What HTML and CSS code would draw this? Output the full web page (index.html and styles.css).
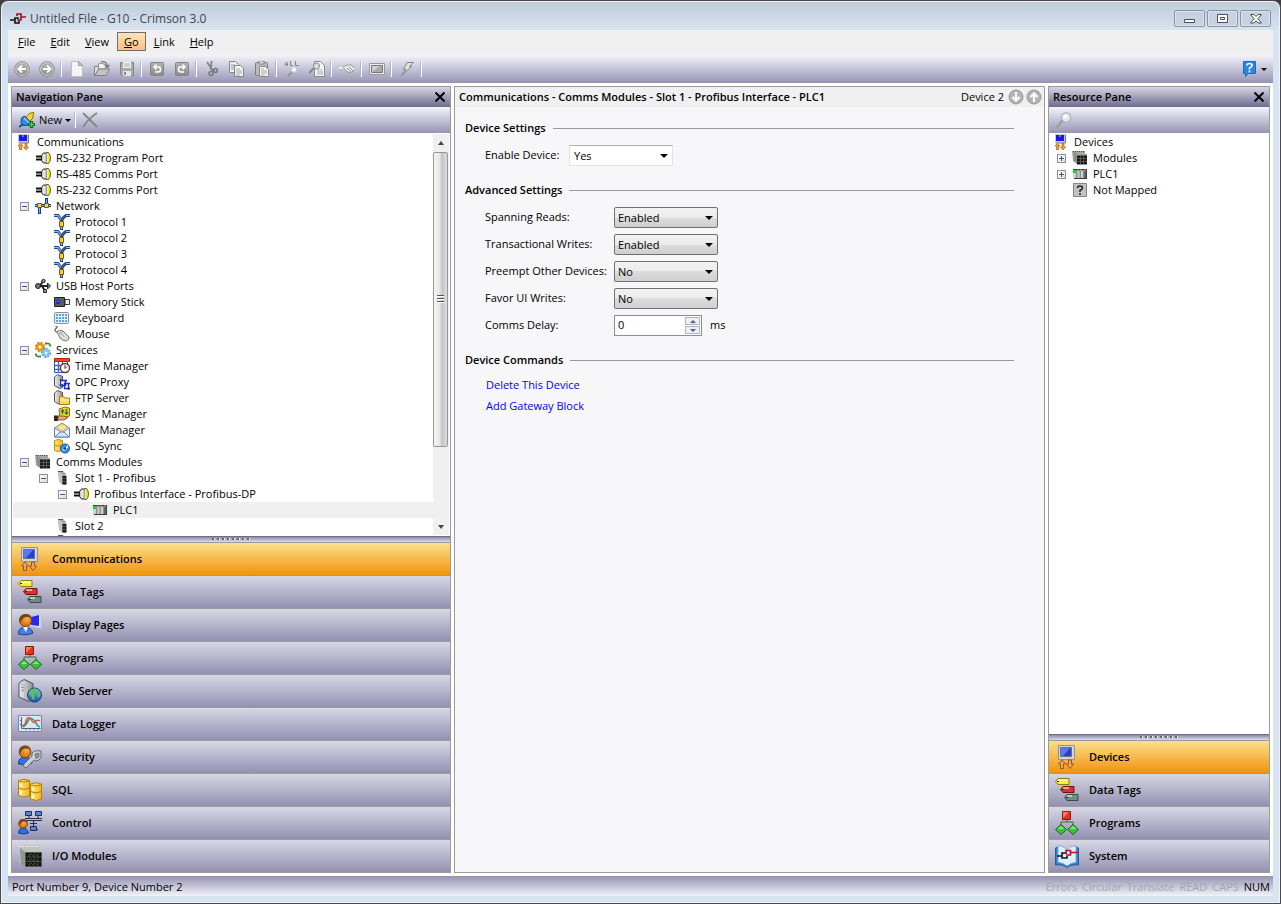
FILE: index.html
```html
<!DOCTYPE html>
<html lang="en">
<head>
  <meta charset="UTF-8">
  <title>Untitled File - G10 - Crimson 3.0</title>
  <link rel="stylesheet" href="styles.css">
</head>
<body>
  <!-- icon set -->
  <svg class="defs" aria-hidden="true">
    <defs>
      <linearGradient id="gGrey" x1="0" y1="0" x2="0" y2="1"><stop offset="0" stop-color="#b4b4b4"/><stop offset="1" stop-color="#8c8c8c"/></linearGradient>
      <linearGradient id="gServer" x1="0" y1="0" x2="1" y2="0"><stop offset="0" stop-color="#f2f2f2"/><stop offset="1" stop-color="#8b8f94"/></linearGradient>
      <linearGradient id="gGold" x1="0" y1="0" x2="1" y2="0"><stop offset="0" stop-color="#ffe98a"/><stop offset="1" stop-color="#f2b91c"/></linearGradient>
      <radialGradient id="gFace" cx=".6" cy=".35"><stop offset="0" stop-color="#ffb04a"/><stop offset="1" stop-color="#dd7a12"/></radialGradient>
      <linearGradient id="gGlobe" x1="0" y1="0" x2="0" y2="1"><stop offset="0" stop-color="#7fc4f5"/><stop offset="1" stop-color="#1450a8"/></linearGradient>
    </defs>

    <symbol id="i-logo" viewBox="0 0 16 14"><path d="M0 8h5M9 6H5v5h4V9" fill="none" stroke="#111" stroke-width="1.6"/><path d="M7 4V2h4v6H7M11 5h5" fill="none" stroke="#a3101c" stroke-width="1.6"/></symbol>

    <!-- toolbar -->
    <symbol id="i-back" viewBox="0 0 16 16"><circle cx="8" cy="8" r="7.3" fill="url(#gGrey)" stroke="#878787"/><circle cx="8" cy="8" r="6.3" fill="none" stroke="#d5d5d5"/><path d="M12 8H5M8 4.5L4.5 8 8 11.500" fill="none" stroke="#fff" stroke-width="2"/></symbol>
    <symbol id="i-fwd" viewBox="0 0 16 16"><circle cx="8" cy="8" r="7.3" fill="url(#gGrey)" stroke="#878787"/><circle cx="8" cy="8" r="6.3" fill="none" stroke="#d5d5d5"/><path d="M4 8h7M8 4.500L11.500 8 8 11.500" fill="none" stroke="#fff" stroke-width="2"/></symbol>
    <symbol id="i-down" viewBox="0 0 16 16"><circle cx="8" cy="8" r="7" fill="#b3b3b3" stroke="#999"/><path d="M8 3v8M4.500 8L8 11.500 11.500 8" fill="none" stroke="#fff" stroke-width="2.200"/></symbol>
    <symbol id="i-up" viewBox="0 0 16 16"><circle cx="8" cy="8" r="7" fill="#b3b3b3" stroke="#999"/><path d="M8 13V5M4.500 8L8 4.500 11.500 8" fill="none" stroke="#fff" stroke-width="2.200"/></symbol>
    <symbol id="i-new" viewBox="0 0 16 16"><path d="M2.500.5h7l4 4v11h-11z" fill="#f4f4f4" stroke="#bdbdc2"/><path d="M9.500.5v4h4z" fill="#c9c9c9" stroke="#999"/></symbol>
    <symbol id="i-open" viewBox="0 0 16 16"><path d="M.5 14.500v-9h4l1 1.500h6v7.500z" fill="#ddd" stroke="#858585"/><path d="M4.500 6V3l3-1 4 2v4h-7z" fill="#f2f2f2" stroke="#8a8a8a"/><path d="M1 14.500l3.500-6.500h11l-3.500 6.500z" fill="#c4c4c4" stroke="#7f7f7f"/><path d="M7 .8q6-1 6.500 5M11 4l2.500 2.500L15.500 4" fill="none" stroke="#777" stroke-width="1.300"/></symbol>
    <symbol id="i-save" viewBox="0 0 16 16"><path d="M1.500 1.500h13v13h-12l-1-1z" fill="#aaa" stroke="#858585"/><path d="M4 1h8v6H4z" fill="#f2f2f2"/><path d="M5 3h6M5 5h6" stroke="#aaa"/><path d="M4 10h8v5H4z" fill="#e6e6e6"/><path d="M5 11h2v3H5z" fill="#888"/></symbol>
    <symbol id="i-undo" viewBox="0 0 16 16"><rect x="1.500" y="1.500" width="13" height="13" rx="1" fill="url(#gGrey)" stroke="#858585"/><path d="M5 6h5q1.500 0 1.500 2.500T9 11H6M7.500 3.500L5 6l2.500 2.500" fill="none" stroke="#fff" stroke-width="1.500"/></symbol>
    <symbol id="i-redo" viewBox="0 0 16 16"><rect x="1.500" y="1.500" width="13" height="13" rx="1" fill="url(#gGrey)" stroke="#858585"/><path d="M11 6H6Q4.500 6 4.500 8.500T7 11h3M8.500 3.500L11 6 8.500 8.500" fill="none" stroke="#fff" stroke-width="1.500"/></symbol>
    <symbol id="i-cut" viewBox="0 0 16 16"><path d="M3 1l6 9M7.500 0L7 9" fill="none" stroke="#858585" stroke-width="1.800"/><circle cx="11.500" cy="9.500" r="1.900" fill="none" stroke="#777" stroke-width="1.500"/><circle cx="7" cy="12.500" r="2" fill="none" stroke="#777" stroke-width="1.500"/></symbol>
    <symbol id="i-copy" viewBox="0 0 16 16"><path d="M.5.500h6l3 3v8h-9z" fill="#eee" stroke="#888"/><path d="M2 4h4M2 6h4M2 8h3" stroke="#999"/><path d="M5.500 4.500h6l3 3v8h-9z" fill="#f4f4f4" stroke="#858585"/><path d="M7 8h4M7 10h6M7 12h6M7 14h4" stroke="#aaa"/></symbol>
    <symbol id="i-paste" viewBox="0 0 16 16"><rect x="1.500" y="1.500" width="12" height="13" rx="1" fill="#bbb" stroke="#7d7d7d"/><path d="M5 0h5v3H5z" fill="#ddd" stroke="#888"/><path d="M5.500 5.500h6l3 3v7h-9z" fill="#f4f4f4" stroke="#8a8a8a"/><path d="M7 8h3M7 10h6M7 12h6M7 14h4" stroke="#aaa"/></symbol>
    <symbol id="i-findall" viewBox="0 0 16 16"><path d="M1.500 5V2l1-1 1 1v3M1.500 3.500h2M6.500 0v4.500H9M11.500 0v4.500H15" fill="none" stroke="#888"/><path d="M4 15l4-4" stroke="#999" stroke-width="2"/><circle cx="10" cy="8.500" r="2.800" fill="#f4f4f4" stroke="#c4c4c4"/></symbol>
    <symbol id="i-findpage" viewBox="0 0 16 16"><path d="M5.500.500h6l4 4v11h-10z" fill="#f3f3f3" stroke="#8a8a8a"/><path d="M8 9h5M8 11h6M8 13h6" stroke="#aaa"/><path d="M0 12l5-5" stroke="#888" stroke-width="2"/><circle cx="7.500" cy="5" r="3" fill="#ddd" stroke="#888"/></symbol>
    <symbol id="i-hand" viewBox="0 0 16 16"><path d="M0 6.500h5" stroke="#eee" stroke-width="3"/><path d="M0 5h4M1 8.500h3" stroke="#b5b5b5"/><path d="M4 6l4-2h4l4 4-3 3-3 1-4-3z" fill="#e9e9e9" stroke="#a0a0a0"/><path d="M8 7l4 4M10 6l4 4M8 10l2 2" stroke="#909090"/><path d="M14 5h2v4" fill="none" stroke="#c9c9c9" stroke-width="2"/></symbol>
    <symbol id="i-screen" viewBox="0 0 16 16"><path d="M.5 2.500h15v11H.5z" fill="#eee" stroke="#999"/><path d="M2.500 4.500h11v7h-11z" fill="#a9a9a9" stroke="#777"/><path d="M3 11l8-6H3z" fill="#cfcfcf"/></symbol>
    <symbol id="i-bolt" viewBox="0 0 16 16"><path d="M8 1.500h6.500l-4 4h2L2 15l5-6.500H4.500z" fill="#e0e0e0" stroke="#858585"/></symbol>
    <symbol id="i-help" viewBox="0 0 16 16"><path d="M1.500.5h12v12H6l-2.500 3v-3h-2z" fill="#2b86dc" stroke="#1c6dc0"/><path d="M5 4.500Q5 2.500 7.500 2.500T10 4.500Q10 6 7.500 7v1.500M7.500 9.500v2" fill="none" stroke="#fff" stroke-width="1.700"/></symbol>
    <symbol id="i-plug" viewBox="0 0 16 16"><path d="M7 5l4-4h2l1-1 1 1-1 2v3l-4 4z" fill="#ffd21e" stroke="#8a6a00" stroke-width=".9"/><path d="M2.500 6l3-2 6.500 6.500-2 2.500-6 .5-2-3z" fill="#2a8be8" stroke="#0d4c96"/><path d="M0 15l4-3" stroke="#0d4c96" stroke-width="1.800"/><path d="M5 6l5 5" stroke="#9fd0ff" stroke-width="1.200"/><path d="M12.500 9v7M9 12.500h7" stroke="#0b6b1c" stroke-width="3.200"/><path d="M12.500 10v5M10 12.500h5" stroke="#3fcf52" stroke-width="1.400"/></symbol>
    <symbol id="i-delete" viewBox="0 0 16 16"><path d="M1 1l14 14M15 1Q7 6 1 15" fill="none" stroke="#878787" stroke-width="1.900"/></symbol>
    <symbol id="i-search" viewBox="0 0 16 16"><path d="M.5 15.500l6-7" stroke="#999" stroke-width="2"/><circle cx="10" cy="5.500" r="4.700" fill="#e3e6e8" stroke="#a5a5a5"/><circle cx="9.500" cy="4.500" r="2" fill="#fff"/></symbol>
    <symbol id="i-close" viewBox="0 0 10 10"><path d="M.5.500l9 9M9.500.500l-9 9" fill="none" stroke="#000" stroke-width="2"/></symbol>

    <!-- tree -->
    <symbol id="t-comms" viewBox="0 0 16 16"><path d="M2 0h11v9H2z" fill="#c8cbd0"/><path d="M3 1h8v6H3z" fill="#1717ee"/><path d="M6 1h2v2H6z" fill="#7474ff"/><path d="M12.500 1v8H3" fill="none" stroke="#777"/><path d="M4.500 9.500L2 12h1.500v4h2v-4H7zM10 16l-2.500-3H9V9.500h2V13h1.500z" fill="#f39a2d" stroke="#a9530a" stroke-width=".6"/></symbol>
    <symbol id="t-port" viewBox="0 0 16 16"><path d="M1 6.500h6M1 9.500h6" stroke="#111" stroke-width="1.800"/><path d="M6.500 5.500l2-2.500h3v10h-3l-2-2.500z" fill="#c9c9c9" stroke="#222"/><path d="M9 4v8" stroke="#fff"/><path d="M11.500 2.500h2q2 2 2 5.500t-2 5.500h-2z" fill="#f7e81e" stroke="#4a4a3a" stroke-width=".9"/><path d="M12 3v10" stroke="#eee"/></symbol>
    <symbol id="t-net" viewBox="0 0 16 16"><path d="M0 7.500h16M4.500 8v8M11.500 0v7" stroke="#123f86" stroke-width="3"/><path d="M0 7.500h16M4.500 8v7M11.500 1v6" stroke="#73b7f4"/><path d="M2.500 5.500h4v4h-4zM9.500 5.500h4v4h-4z" fill="#ffd257" stroke="#8b5200"/></symbol>
    <symbol id="t-proto" viewBox="0 0 16 16"><path d="M0 1.500h4l3.500 5V16M8 6l2-3 2-1.500h4" fill="none" stroke="#174a91" stroke-width="3"/><path d="M0 1.500h4l3 4M12 1.500h4M7.500 12v3" fill="none" stroke="#8bc6f7" stroke-width="1.200"/><path d="M8 6l3-3.500" fill="none" stroke="#555" stroke-width="1.500"/><path d="M5.500 7.500h4v5h-4z" fill="#ffc94c" stroke="#8b5200"/></symbol>
    <symbol id="t-usb" viewBox="0 0 16 16"><path d="M2 8h12M5 8l3-5M7 8l3 5" fill="none" stroke="#222" stroke-width="2"/><circle cx="3" cy="8" r="2.500" fill="#777" stroke="#222"/><path d="M12.500 5l3 3-3 3z" fill="#777" stroke="#222"/><circle cx="8.500" cy="3" r="1.700" fill="#999" stroke="#222"/><path d="M8.500 11.500h3v3h-3z" fill="#999" stroke="#222"/></symbol>
    <symbol id="t-stick" viewBox="0 0 16 16"><path d="M.5 3.500h10v9H.5z" fill="#565b66" stroke="#222"/><path d="M11 5.500h4.500v5H11z" fill="#eee" stroke="#333"/><circle cx="4" cy="8" r="2" fill="#1414ff"/><path d="M3.500 7h1v1h-1z" fill="#fff"/></symbol>
    <symbol id="t-kbd" viewBox="0 0 16 16"><rect x=".5" y="2.500" width="14" height="11" rx="1" fill="#e6eef8" stroke="#8b8f96"/><path d="M2 5h11M2 8h11M2 11h11" stroke="#5ba3ec" stroke-width="2" stroke-dasharray="2 1"/></symbol>
    <symbol id="t-mouse" viewBox="0 0 16 16"><path d="M1 0h2v2L1 3v2l3 2" fill="none" stroke="#444"/><path d="M3 6q2-3 6-1l6 6q1 3-3 4-3 0-6-3z" fill="#deded8" stroke="#777"/><path d="M4 9l5-4M6.500 7l4 4" stroke="#999"/></symbol>
    <symbol id="t-gears" viewBox="0 0 16 16"><circle cx="5" cy="5" r="4.800" fill="none" stroke="#a66200" stroke-dasharray="2 1.800"/><circle cx="5" cy="5" r="3" fill="#fff" stroke="#e8980f" stroke-width="2.800"/><circle cx="11" cy="11" r="4.500" fill="none" stroke="#1f6db6" stroke-dasharray="1.800 1.600"/><circle cx="11" cy="11" r="2.700" fill="#fff" stroke="#7cc0f8" stroke-width="2.600"/><path d="M10 1.500h3q2 0 2.500 3M11 .5v2M6 14.500H3q-2 0-2.500-3M5 13.500v2" fill="none" stroke="#23932c" stroke-width="1.700"/></symbol>
    <symbol id="t-time" viewBox="0 0 16 16"><path d="M.5.500h15v3H.5z" fill="#f0431f" stroke="#b52a0d"/><path d="M.5 3.500h13v11H.5z" fill="#fff" stroke="#1d56b4"/><path d="M1 7.500h12M1 11.500h12M4.500 4v11M8.500 4v11" stroke="#2b6ed2" stroke-width="1.300"/><circle cx="11" cy="10" r="4.500" fill="#fff" stroke="#7c2c24" stroke-width="1.300"/><path d="M11 7v3.500l2-2" fill="none" stroke="#333"/></symbol>
    <symbol id="t-opc" viewBox="0 0 16 16"><path d="M.5 3l3-2.500 5 2v11l-3 1-5-3z" fill="url(#gServer)" stroke="#4c4f52"/><path d="M5 6h5v4H5z" fill="#fff"/><path d="M6.500 5v7M6 6.500h7M11.500 6v6M6 11.500h5M10.500 8.500v6M10 9.500h6M14.500 9v7M10 14.500h6" stroke="#1c24d8" stroke-width="1.400"/></symbol>
    <symbol id="t-ftp" viewBox="0 0 16 16"><path d="M.5 3l3-2.500 5 2v11l-3 1-5-3z" fill="url(#gServer)" stroke="#4c4f52"/><path d="M5.500 14.500v-8h4l1 1.500h5v6.500z" fill="#ffd95c" stroke="#b47d10"/><path d="M6 10h9" stroke="#fff1b0"/></symbol>
    <symbol id="t-sync" viewBox="0 0 16 16"><path d="M5 3l6-2 4.500 1v8l-4 3H6z" fill="#f4c93a" stroke="#9a6a00"/><path d="M8.500 8V4M7 5.500L8.500 4 10 5.500M12.500 3v5M11 6.500L12.500 8 14 6.500" fill="none" stroke="#17851d" stroke-width="1.400"/><path d="M0 9.500h4V15H0z" fill="#33261c"/><path d="M4 10h5l5 1-4 3H4z" fill="#e9ae6c" stroke="#70411a" stroke-width=".8"/></symbol>
    <symbol id="t-mail" viewBox="0 0 16 16"><path d="M.5 6L8 1l7.500 5v9H.5z" fill="#eaf3ff" stroke="#6d7fae"/><path d="M3.500 6V4L8 2l4.500 2v2L8 9z" fill="#ffe590" stroke="#c5a44a" stroke-width=".7"/><path d="M1 6l6 4M15 6l-6 4M1 15l5-5h4l5 5z" fill="#d3e5fb" stroke="#6d7fae"/></symbol>
    <symbol id="t-sql" viewBox="0 0 16 16"><path d="M.5 2.500Q4 .5 8.500 2.500v10Q4 14.500.5 12.500z" fill="url(#gGold)" stroke="#c18b0a"/><path d="M1 7.500q4 1 7 0" fill="none" stroke="#c18b0a"/><circle cx="11" cy="10.500" r="4.500" fill="#3a96ea" stroke="#154e94"/><path d="M8.500 12q3 1 5-3M13.500 7.500v2h-2" fill="none" stroke="#fff"/><circle cx="11" cy="10.500" r="1.200" fill="#0e3f80"/></symbol>
    <symbol id="t-modules" viewBox="0 0 16 16"><path d="M0 1h13v3h2v10H5l-4-3z" fill="#a3a8a0"/><path d="M1.500 1v10L5 13.500V4z" fill="#8b9188"/><path d="M1 1.500h12" stroke="#4c4f4a" stroke-dasharray="1 1"/><path d="M5 5.500h10v9H5z" fill="#191919"/><path d="M5 8.500h10M5 11.500h10" stroke="#63675f" stroke-width=".8"/><path d="M8.500 5v9M11.500 5v9" stroke="#63675f" stroke-width=".8"/></symbol>
    <symbol id="t-slot" viewBox="0 0 16 16"><path d="M4 1h5l3 3v10.500H8l-3-3z" fill="#a3a8a0"/><path d="M5 1v10l3 3V4z" fill="#c3c8c0"/><path d="M4 1.500h5" stroke="#555"/><path d="M8.500 6h4v8.500h-4z" fill="#191919"/><path d="M8.500 8.500h4M8.500 11.500h4" stroke="#70746c" stroke-width=".8"/></symbol>
    <symbol id="t-plc" viewBox="0 0 16 16"><path d="M1 3h14v10H2z" fill="#3c3c3c"/><path d="M1 4h13v8H1z" fill="#8e8e8e"/><path d="M1 7h3v5H1zM5.500 5h2v7h-2zM9 5h2v7H9z" fill="#d0d0d0"/><path d="M12 5h2v7h-2z" fill="#666"/><path d="M1 4h3v3H1z" fill="#19d32b"/><path d="M5 3h2v1H5zM8 3h2v1H8zM12 3h2v1h-2z" fill="#ff2a2a"/></symbol>
    <symbol id="t-unknown" viewBox="0 0 16 16"><path d="M1.500 1.500h13v13h-13z" fill="#c2c2c2" stroke="#858585"/><path d="M5.500 6Q5.500 4 8 4t2.500 2Q10.500 7 8 8.500V10M8 11v2" fill="none" stroke="#222" stroke-width="1.500"/></symbol>

    <!-- categories -->
    <symbol id="c-comms" viewBox="0 0 24 24"><path d="M3.500.500h16v14h-16z" fill="#cfd6de" stroke="#8a929c"/><path d="M5.500 2.500h11v9h-11z" fill="#2a3fd0" stroke="#6a7088"/><path d="M6 3h9L8 11H6z" fill="#5b78ee"/><path d="M7 15l-3.500 4H5.500v4.500h3V19h2zM15 23.500L11.500 19h2v-4h3v4h2z" fill="#e8a466" stroke="#a3561c"/></symbol>
    <symbol id="c-tags" viewBox="0 0 24 24"><path d="M3 .5h11v6H3l-2.500-3z" fill="#fdf02c" stroke="#8d7b12"/><path d="M8 8.500h11v6H8l-2.500-3z" fill="#d93333" stroke="#6f1212"/><path d="M12 16.500h11v6H12l-2.500-3z" fill="#758b7d" stroke="#3c4b42"/><path d="M3 2h10M8 10h6M12 18h5" stroke="#fff" stroke-opacity=".7" stroke-width="1.500"/><path d="M2 3.500h2M7 11.500h2M11 19.500h2" stroke="#222"/></symbol>
    <symbol id="c-display" viewBox="0 0 24 24"><path d="M12 3l11-2v14l-11-2z" fill="#dfe4f2" stroke="#c3c8d8"/><path d="M13 4l8-2v11l-8-1z" fill="#2828f0"/><path d="M.5 20Q1 14 7 14t8 6q-6 3-14.500 1z" fill="#4b7fdf" stroke="#1b428f"/><path d="M5 14l3 5 2-5z" fill="#fff"/><circle cx="7.500" cy="7.500" r="6" fill="url(#gFace)" stroke="#7c3f09"/><path d="M1.500 8Q1 1 8 1q5 0 6 5-2-2.500-5-2-4 0-6 5z" fill="#76471a"/></symbol>
    <symbol id="c-programs" viewBox="0 0 24 24"><path d="M12 8v3M6 15v-4h12v4" fill="none" stroke="#326c35"/><path d="M7.500.500h8v8h-8z" fill="#e8301c" stroke="#8b160a"/><path d="M8 7V1h6z" fill="#ff7a5f"/><path d="M6 13.500l5.500 5L6 23.500.5 18.500zM18 13.500l5.500 5-5.500 5-5.500-5z" fill="#3fc23b" stroke="#176a18"/><path d="M6 15l3.500 3H2.500zM18 15l3.500 3h-7z" fill="#86e37c"/></symbol>
    <symbol id="c-web" viewBox="0 0 24 24"><path d="M1 4l5-3.500 9 4v15l-4 3L1 18z" fill="url(#gServer)" stroke="#4e5256"/><path d="M1 4l6 3v13" fill="none" stroke="#b5b5b5"/><path d="M3 8l3 1M3 11l3 1" stroke="#888"/><circle cx="16.500" cy="16" r="7" fill="url(#gGlobe)" stroke="#173f7d"/><path d="M11 13q2-4 6-3.500l1 2-2 2 1 3-1 5q-2-1-3-5zM19 11l3 2v4l-2 2-1-4z" fill="#5cc053"/></symbol>
    <symbol id="c-logger" viewBox="0 0 24 24"><path d="M.5 3.500h23v16H.5z" fill="#d7eafc" stroke="#5d8fd0"/><path d="M3.500 5v11.500h19M2 8.500h2M2 12.500h2M8 16v2M12 16v2M16 16v2M20 16v2" fill="none" stroke="#55667c"/><path d="M5 15q3-2 5-6t4-2q3 1 4 4t4 4" fill="none" stroke="#3da06a" stroke-width="1.800"/><path d="M4 14q3 0 4-5t5-2q2 5 4 3 2-3 5-1" fill="none" stroke="#e0504a" stroke-width="1.500"/></symbol>
    <symbol id="c-security" viewBox="0 0 24 24"><path d="M.5 18Q1 12 7 12t7 6q-6 3-13.500 1z" fill="#2f72e0" stroke="#133d8c"/><circle cx="7" cy="7" r="5.800" fill="url(#gFace)" stroke="#7c3f09"/><path d="M1 7Q1 .5 7 .5q5 0 6 5-2-2.500-5-2-4 0-6 5z" fill="#76471a"/><path d="M14 8q2-3 9-2v6q-1 4-5 4l-2-1-8 8-2.500-1.500L6 19l8-8z" fill="#c9ced4" stroke="#676c72"/><path d="M17 9l4-1v4l-3 2z" fill="#8f959c" stroke="#5a5f65" stroke-width=".6"/></symbol>
    <symbol id="c-sql" viewBox="0 0 24 24"><path d="M.5 2.500Q6 0 11.500 2.500v15Q6 20.500.5 17.500z" fill="url(#gGold)" stroke="#b58106"/><path d="M.5 10q5.500 3 11 0M.5 3q5.500 2 11 0" fill="none" stroke="#b58106"/><path d="M12.500 6Q18 3.500 23.500 6v15q-5.500 3-11 0z" fill="url(#gGold)" stroke="#b58106"/><path d="M12.500 13.500q5.500 3 11 0M12.500 7q5.500 2 11 0" fill="none" stroke="#b58106"/><path d="M3 6v3M3 13v4M15 10v3M15 17v4" stroke="#fff6c0" stroke-width="2"/></symbol>
    <symbol id="c-control" viewBox="0 0 24 24"><path d="M7 7.500h17M7 9.500h17M11 5v2M20 5v2M15.500 10v6M12 12.500h7M12 18.500h8" stroke="#26304f"/><path d="M7.500.500h6v4h-6zM17.500.500h6v4h-6zM12.500 15.500h6v4h-6z" fill="#5b86d0" stroke="#1f2f55"/><path d="M.5 22Q1 17 5 17t5.500 5q-5 2-10 0z" fill="#2f72e0" stroke="#133d8c"/><circle cx="5" cy="13" r="4.200" fill="url(#gFace)" stroke="#7c3f09"/><path d="M.8 13q-.5-5 4.200-5t4.500 4q-2-2-3.500-1.500-3 0-4 3.500z" fill="#76471a"/></symbol>
    <symbol id="c-io" viewBox="0 0 24 24"><path d="M1 3l4-2h17v3l1 2v3H7v14l-5-4z" fill="#bfc3ba"/><path d="M2 4l5 4v15l-4-3z" fill="#92978c"/><path d="M1 2.500h20" stroke="#eef0ea" stroke-dasharray="2 1"/><path d="M7.500 8.500h16v14h-16z" fill="#0e0e0e" stroke="#555a50"/><path d="M8 13h15M8 17.500h15M12 9v13M16 9v13M20 9v13" stroke="#4b5047"/><path d="M9 10l2 2M13 10l2 2M17 10l2 2M9 15l2 2M13 15l2 2M17 15l2 2M9 19l2 2M13 19l2 2M17 19l2 2" stroke="#60665b" stroke-width=".7"/></symbol>
    <symbol id="c-system" viewBox="0 0 24 24"><path d="M.5 4l3-1v16q5-1 8.500 3 3.500-4 8.500-3V3l3 1v17q-7-1-11.500 2.500Q7.500 20 .5 21z" fill="#2f7ed2" stroke="#205d9f"/><path d="M3 1.500q5.500 0 9 4.500 3.500-4.500 9-4.500v17q-5 0-9 3.500-4-3.500-9-3.500z" fill="#ddeefc" stroke="#88abd0"/><path d="M2 12h5M12 9H7v5h5v-2" fill="none" stroke="#151515" stroke-width="1.600"/><path d="M11 8V6.500h4.500V11H11M16 8.500h7" fill="none" stroke="#b01722" stroke-width="1.600"/></symbol>
  </svg>

  <div class="window">
    <header class="titlebar">
      <svg class="logo"><use href="#i-logo"/></svg>
      <h1>Untitled File - G10 - Crimson 3.0</h1>
      <div class="window-buttons">
        <button aria-label="Minimize"><svg viewBox="0 0 12 10"><path d="M.5 5.500h10v3H.5z" fill="#fff" stroke="#4a4f60"/></svg></button>
        <button aria-label="Restore"><svg viewBox="0 0 12 10"><path d="M.5.500h10v8H.5z" fill="#fff" stroke="#4a4f60"/><path d="M3.500 3.500h4v2h-4z" fill="#fff" stroke="#4a4f60"/></svg></button>
        <button aria-label="Close"><svg viewBox="0 0 12 10"><path d="M.5.500H4l2 2 2-2h3.500L7.800 4.800l3.700 4.200H8L6 7 4 9H.5l3.700-4.200z" fill="#fff" stroke="#4a4f60"/></svg></button>
      </div>
    </header>

    <div class="client">
      <nav class="menubar">
        <button><u>F</u>ile</button>
        <button><u>E</u>dit</button>
        <button><u>V</u>iew</button>
        <button class="active"><u>G</u>o</button>
        <button><u>L</u>ink</button>
        <button><u>H</u>elp</button>
      </nav>

      <div class="toolbar main-toolbar">
        <button aria-label="Back"><svg><use href="#i-back"/></svg></button>
        <button aria-label="Forward"><svg><use href="#i-fwd"/></svg></button>
        <span class="sep"></span>
        <button aria-label="New"><svg><use href="#i-new"/></svg></button>
        <button aria-label="Open"><svg><use href="#i-open"/></svg></button>
        <button aria-label="Save"><svg><use href="#i-save"/></svg></button>
        <span class="sep"></span>
        <button aria-label="Undo"><svg><use href="#i-undo"/></svg></button>
        <button aria-label="Redo"><svg><use href="#i-redo"/></svg></button>
        <span class="sep"></span>
        <button aria-label="Cut"><svg><use href="#i-cut"/></svg></button>
        <button aria-label="Copy"><svg><use href="#i-copy"/></svg></button>
        <button aria-label="Paste"><svg><use href="#i-paste"/></svg></button>
        <span class="sep"></span>
        <button aria-label="Find all"><svg><use href="#i-findall"/></svg></button>
        <button aria-label="Find"><svg><use href="#i-findpage"/></svg></button>
        <span class="sep"></span>
        <button aria-label="Properties"><svg><use href="#i-hand"/></svg></button>
        <span class="sep"></span>
        <button aria-label="Screen"><svg><use href="#i-screen"/></svg></button>
        <span class="sep"></span>
        <button aria-label="Download"><svg><use href="#i-bolt"/></svg></button>
        <span class="sep"></span>
        <button class="help" aria-label="Help topics"><svg><use href="#i-help"/></svg><i class="caret"></i></button>
      </div>

      <main class="panes">
        <section class="pane">
          <header class="pane-title">
            <h2>Navigation Pane</h2>
            <button aria-label="Close navigation pane"><svg><use href="#i-close"/></svg></button>
          </header>
          <div class="toolbar pane-toolbar">
            <button class="new"><svg><use href="#i-plug"/></svg>New<i class="caret"></i></button>
            <span class="sep"></span>
            <button aria-label="Delete"><svg><use href="#i-delete"/></svg></button>
          </div>
          <div class="tree-wrap">
            <ul class="tree">
              <li class="l0"><svg><use href="#t-comms"/></svg>Communications</li>
              <li class="l1"><svg><use href="#t-port"/></svg>RS-232 Program Port</li>
              <li class="l1"><svg><use href="#t-port"/></svg>RS-485 Comms Port</li>
              <li class="l1"><svg><use href="#t-port"/></svg>RS-232 Comms Port</li>
              <li class="l1 parent"><button class="toggle minus" aria-label="Collapse"></button><svg><use href="#t-net"/></svg>Network</li>
              <li class="l2"><svg><use href="#t-proto"/></svg>Protocol 1</li>
              <li class="l2"><svg><use href="#t-proto"/></svg>Protocol 2</li>
              <li class="l2"><svg><use href="#t-proto"/></svg>Protocol 3</li>
              <li class="l2"><svg><use href="#t-proto"/></svg>Protocol 4</li>
              <li class="l1 parent"><button class="toggle minus" aria-label="Collapse"></button><svg><use href="#t-usb"/></svg>USB Host Ports</li>
              <li class="l2"><svg><use href="#t-stick"/></svg>Memory Stick</li>
              <li class="l2"><svg><use href="#t-kbd"/></svg>Keyboard</li>
              <li class="l2"><svg><use href="#t-mouse"/></svg>Mouse</li>
              <li class="l1 parent"><button class="toggle minus" aria-label="Collapse"></button><svg><use href="#t-gears"/></svg>Services</li>
              <li class="l2"><svg><use href="#t-time"/></svg>Time Manager</li>
              <li class="l2"><svg><use href="#t-opc"/></svg>OPC Proxy</li>
              <li class="l2"><svg><use href="#t-ftp"/></svg>FTP Server</li>
              <li class="l2"><svg><use href="#t-sync"/></svg>Sync Manager</li>
              <li class="l2"><svg><use href="#t-mail"/></svg>Mail Manager</li>
              <li class="l2"><svg><use href="#t-sql"/></svg>SQL Sync</li>
              <li class="l1 parent"><button class="toggle minus" aria-label="Collapse"></button><svg><use href="#t-modules"/></svg>Comms Modules</li>
              <li class="l2 parent"><button class="toggle minus" aria-label="Collapse"></button><svg><use href="#t-slot"/></svg>Slot 1 - Profibus</li>
              <li class="l3 parent"><button class="toggle minus" aria-label="Collapse"></button><svg><use href="#t-port"/></svg>Profibus Interface - Profibus-DP</li>
              <li class="l4 selected"><svg><use href="#t-plc"/></svg>PLC1</li>
              <li class="l2"><svg><use href="#t-slot"/></svg>Slot 2</li>
              <li class="l2"><svg><use href="#t-slot"/></svg></li>
            </ul>
            <div class="scrollbar">
              <i class="arrow-up"></i>
              <div class="thumb"><i class="grip"></i></div>
              <i class="arrow-down"></i>
            </div>
          </div>
          <div class="splitter"></div>
          <div class="categories">
            <button class="active"><svg><use href="#c-comms"/></svg>Communications</button>
            <button><svg><use href="#c-tags"/></svg>Data Tags</button>
            <button><svg><use href="#c-display"/></svg>Display Pages</button>
            <button><svg><use href="#c-programs"/></svg>Programs</button>
            <button><svg><use href="#c-web"/></svg>Web Server</button>
            <button><svg><use href="#c-logger"/></svg>Data Logger</button>
            <button><svg><use href="#c-security"/></svg>Security</button>
            <button><svg><use href="#c-sql"/></svg>SQL</button>
            <button><svg><use href="#c-control"/></svg>Control</button>
            <button><svg><use href="#c-io"/></svg>I/O Modules</button>
          </div>
        </section>

        <section class="pane editor">
          <header class="editor-title">
            <h2>Communications - Comms Modules - Slot 1 - Profibus Interface - PLC1</h2>
            <span>Device 2</span>
            <button aria-label="Next device"><svg><use href="#i-down"/></svg></button>
            <button aria-label="Previous device"><svg><use href="#i-up"/></svg></button>
          </header>
          <form class="settings">
            <h3>Device Settings</h3>
            <div class="field short">
              <label for="enable">Enable Device:</label>
              <select id="enable" class="flat"><option>Yes</option><option>No</option></select>
            </div>

            <h3>Advanced Settings</h3>
            <div class="field">
              <label for="reads">Spanning Reads:</label>
              <select id="reads"><option>Enabled</option><option>Disabled</option></select>
            </div>
            <div class="field">
              <label for="writes">Transactional Writes:</label>
              <select id="writes"><option>Enabled</option><option>Disabled</option></select>
            </div>
            <div class="field">
              <label for="preempt">Preempt Other Devices:</label>
              <select id="preempt"><option>No</option><option>Yes</option></select>
            </div>
            <div class="field">
              <label for="favor">Favor UI Writes:</label>
              <select id="favor"><option>No</option><option>Yes</option></select>
            </div>
            <div class="field">
              <label for="delay">Comms Delay:</label>
              <div class="spinner">
                <input id="delay" type="text" value="0">
                <div class="spin-buttons">
                  <button type="button" aria-label="Increase"><i class="spin-up"></i></button>
                  <button type="button" aria-label="Decrease"><i class="spin-down"></i></button>
                </div>
              </div>
              <span class="unit">ms</span>
            </div>

            <h3>Device Commands</h3>
            <div class="commands">
              <a href="#">Delete This Device</a>
              <a href="#">Add Gateway Block</a>
            </div>
          </form>
        </section>

        <section class="pane">
          <header class="pane-title">
            <h2>Resource Pane</h2>
            <button aria-label="Close resource pane"><svg><use href="#i-close"/></svg></button>
          </header>
          <div class="toolbar pane-toolbar">
            <button aria-label="Find"><svg><use href="#i-search"/></svg></button>
          </div>
          <div class="tree-wrap">
            <ul class="tree">
              <li class="l0"><svg><use href="#t-comms"/></svg>Devices</li>
              <li class="l1 parent"><button class="toggle plus" aria-label="Expand"></button><svg><use href="#t-modules"/></svg>Modules</li>
              <li class="l1 parent"><button class="toggle plus" aria-label="Expand"></button><svg><use href="#t-plc"/></svg>PLC1</li>
              <li class="l1"><svg><use href="#t-unknown"/></svg>Not Mapped</li>
            </ul>
          </div>
          <div class="splitter"></div>
          <div class="categories">
            <button class="active"><svg><use href="#c-comms"/></svg>Devices</button>
            <button><svg><use href="#c-tags"/></svg>Data Tags</button>
            <button><svg><use href="#c-programs"/></svg>Programs</button>
            <button><svg><use href="#c-system"/></svg>System</button>
          </div>
        </section>
      </main>

      <footer class="statusbar">
        <span class="message">Port Number 9, Device Number 2</span>
        <span>Errors</span>
        <span>Circular</span>
        <span>Translate</span>
        <span>READ</span>
        <span>CAPS</span>
        <span class="on">NUM</span>
      </footer>
    </div>
  </div>
</body>
</html>
```
FILE: styles.css
```css
* { box-sizing: border-box; }
body { margin: 0; background: #3f3d3f; font-family: "Open Sans", "Noto Sans", sans-serif; font-size: 11px; line-height: 16px; color: #000; }
h1, h2, h3 { margin: 0; font-size: 11px; line-height: 16px; }
h2, h3, .categories button { font-weight: 600; }
button { padding: 0; border: 0; background: none; font: inherit; color: inherit; display: flex; align-items: center; justify-content: center; }
.defs { position: absolute; width: 0; height: 0; }

/* window frame */
.window { display: flex; flex-direction: column; height: 100vh; min-height: 640px; padding: 1px 7px 7px; border: 1px solid #4a484c; border-radius: 8px 8px 0 0; background: #d7e4f2; box-shadow: inset 0 0 0 1px #eef4fa; }
.titlebar { display: flex; align-items: center; height: 28px; margin: 0 -6px; padding: 5px 8px 0 8px; border-radius: 6px 6px 0 0; background: linear-gradient(#bfccda, #d7e3f0); }
.logo { width: 16px; height: 14px; margin-right: 4px; }
.titlebar h1 { flex: 1; font-size: 12px; font-weight: 400; color: #3f4650; }
.window-buttons { display: flex; gap: 2px; }
.window-buttons button { width: 31px; height: 17px; border: 1px solid #8793a8; border-radius: 2px; box-shadow: inset 0 0 0 1px #dbe5f0; background: #c5d2e0; }
.window-buttons svg { width: 12px; height: 10px; }
.client { flex: 1; min-height: 0; display: flex; flex-direction: column; background: #fff; }

/* menu and toolbars */
.menubar { display: flex; gap: 1px; height: 25px; padding: 2px 3px 4px; background: #f0f0f0; }
.menubar button { padding: 0 6px; border: 1px solid transparent; }
.menubar .active { border-color: #6d6d6d; background: linear-gradient(#ffe3b8, #ffc083); }
.toolbar { display: flex; align-items: center; background: linear-gradient(#f3f3fb, #9694b4); }
.toolbar button { width: 25px; height: 24px; }
.toolbar svg { width: 16px; height: 16px; }
.main-toolbar { height: 28px; padding: 0 6px 0 1px; }
.sep { width: 1px; height: 16px; margin: 0 2px; background: #fff; box-shadow: -1px 0 #b3b2c8; }
.caret { width: 0; height: 0; border: 3px solid transparent; border-top-color: #000; border-bottom: 0; }
.toolbar .help { width: auto; margin-left: auto; gap: 3px; }

/* panes */
.panes { flex: 1; min-height: 0; display: grid; grid-template-columns: 440px 1fr 222px; gap: 3px; padding: 3px; }
.pane { display: flex; flex-direction: column; min-height: 0; border: 1px solid #9b9b9b; }
.pane-title { display: flex; align-items: center; justify-content: space-between; height: 20px; padding: 0 5px 0 4px; background: linear-gradient(#d6d5e4, #6e6b8d); }
.pane-title svg { display: block; width: 10px; height: 10px; }
.pane-toolbar { height: 26px; padding-left: 2px; }
.toolbar .new { width: auto; padding: 0 2px 0 5px; gap: 3px; }
.new svg { margin-right: 1px; }

.tree-wrap { flex: 1; min-height: 0; display: flex; overflow: hidden; }
.tree { flex: 1; margin: 0; padding: 1px 0 0 1px; list-style: none; overflow: hidden; }
.tree li { display: flex; align-items: center; height: 16px; white-space: nowrap; }
.tree svg { flex: none; width: 16px; height: 16px; margin-right: 5px; }
.l0 { padding-left: 3px; }
.l1 { padding-left: 22px; }
.l2 { padding-left: 41px; }
.l3 { padding-left: 60px; }
.l4 { padding-left: 79px; }
.tree .parent button { margin-left: -15px; margin-right: 6px; }
.selected { background: #efefef; }
.toggle { flex: none; width: 9px; height: 9px; border: 1px solid #919191; background: linear-gradient(#345ba8, #345ba8) center / 5px 1px no-repeat, linear-gradient(135deg, #fff, #dcdcdc); }
.plus { background: linear-gradient(#345ba8, #345ba8) center / 5px 1px no-repeat, linear-gradient(#345ba8, #345ba8) center / 1px 5px no-repeat, linear-gradient(135deg, #fff, #dcdcdc); }

.scrollbar { display: flex; flex-direction: column; align-items: center; width: 16px; margin: 1px 1px 1px 0; padding: 7px 1px 6px 0; background: #f0f0f0; }
.arrow-up, .arrow-down { border: 3px solid transparent; }
.arrow-up { border-bottom: 4px solid #444; border-top: 0; }
.arrow-down { margin-top: auto; border-top: 4px solid #444; border-bottom: 0; }
.thumb { display: flex; align-items: center; justify-content: center; width: 15px; height: 76%; margin-top: 7px; border: 1px solid #979797; border-radius: 2px; background: linear-gradient(90deg, #f5f5f5, #e6e6e8 45%, #c4c5c9 60%, #dcdcde); }
.grip { width: 7px; height: 8px; background: repeating-linear-gradient(#555 0 1px, #fff 1px 2px, transparent 2px 3px); }
.splitter { display: flex; justify-content: center; height: 6px; border-top: 1px solid #6e6b8d; background: linear-gradient(#8b89a8, #dddcec); }
.splitter::before { content: ""; width: 38px; height: 2px; margin-top: 1px; background: repeating-linear-gradient(90deg, #666 0 2px, #f2f2f2 2px 3px, transparent 3px 5px); }

.categories button { width: 100%; height: 33px; padding-left: 6px; gap: 10px; justify-content: flex-start; border-top: 1px solid #9b9b9b; background: linear-gradient(#d8d7e5, #9391b1); }
.categories svg { width: 24px; height: 24px; }
.categories .active { background: linear-gradient(#fbe08c, #f1930f); }

/* editor */
.editor { background: #f7f7fa; }
.editor-title { display: flex; align-items: center; height: 20px; padding: 0 2px 0 4px; background: #f0f0f0; }
.editor-title h2 { flex: 1; }
.editor-title button { margin-left: 2px; }
.editor-title span { margin-right: 2px; }
.editor-title svg { display: block; width: 16px; height: 16px; }
.settings { padding: 13px 30px 0 10px; }
.settings h3 { display: flex; align-items: center; gap: 7px; margin-bottom: 9px; }
.settings h3::after { content: ""; flex: 1; height: 1px; background: #9b9b9b; }
.field { display: flex; align-items: center; height: 21px; margin-bottom: 6px; padding-left: 20px; }
.field + h3 { margin-top: 16px; }
.field label { width: 129px; padding-bottom: 2px; }
.field.short label { width: 84px; }
.field select { appearance: none; width: 104px; height: 21px; padding: 0 3px; border: 1px solid #707070; border-radius: 2px; font: inherit; color: #000; background: url("data:image/svg+xml,%3Csvg xmlns='http://www.w3.org/2000/svg' width='8' height='4'%3E%3Cpath d='M0 0h8L4 4z'/%3E%3C/svg%3E") right 4px center no-repeat, linear-gradient(#f2f2f2, #ebebeb 50%, #dddddd 50%, #cfcfcf); }
.field .flat { padding: 0 4px; border-color: #abadb3 #e2e3ea #e2e3ea; border-radius: 0; background-image: url("data:image/svg+xml,%3Csvg xmlns='http://www.w3.org/2000/svg' width='8' height='4'%3E%3Cpath d='M0 0h8L4 4z'/%3E%3C/svg%3E"); background-color: #fff; }
.spinner { display: flex; width: 88px; height: 21px; border: 1px solid #8a8d98; background: #fff; }
.spinner input { flex: 1; min-width: 0; padding: 0 3px 2px; border: 0; background: none; font: inherit; }
.spin-buttons { display: flex; flex-direction: column; gap: 1px; padding: 1px; }
.spin-buttons button { flex: 1; width: 15px; border: 1px solid #b5b5ba; background: #efeff2; }
.spin-up, .spin-down { border: 3px solid transparent; }
.spin-up { border-top: 0; border-bottom-color: #4a5fae; }
.spin-down { border-bottom: 0; border-top-color: #4a5fae; }
.unit { margin-left: 8px; padding-bottom: 2px; }
.commands { display: flex; flex-direction: column; align-items: flex-start; gap: 5px; padding-left: 21px; }
.commands a { color: #0000ff; text-decoration: none; }

.statusbar { display: flex; align-items: center; gap: 5px; height: 20px; padding: 1px 3px 0 4px; color: #a5a5ad; background: linear-gradient(#9492b1, #f3f3fa); }
.message { flex: 1; color: #000; }
.on { color: #000; }
```
